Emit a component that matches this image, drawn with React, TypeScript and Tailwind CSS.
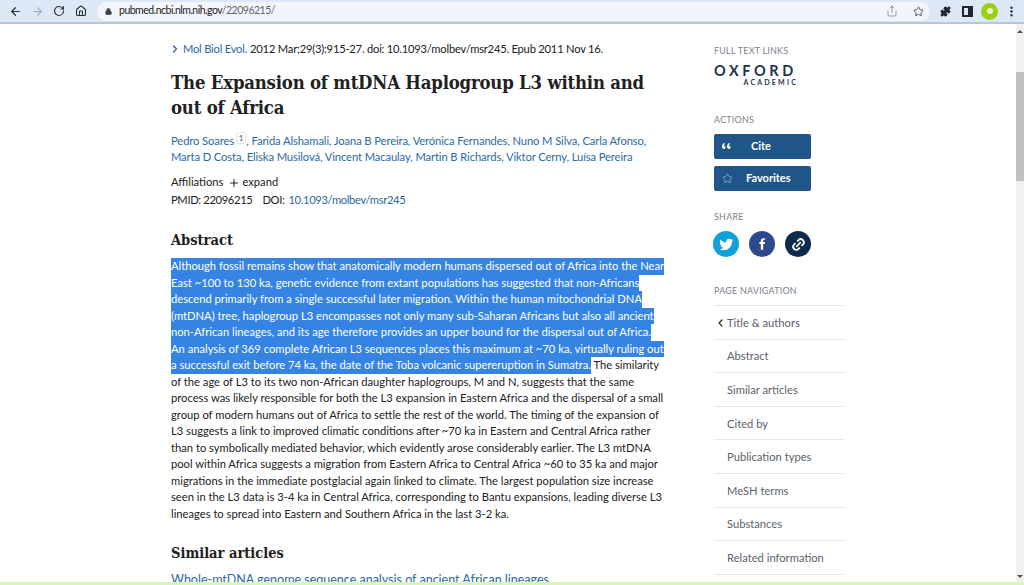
import React from 'react';
import { ArrowLeft, ArrowRight, RotateCw, Home, Lock, Share, Star, Puzzle, ChevronRight, ChevronLeft, Plus, Link2, MoreVertical } from 'lucide-react';

const selectedLines = [
  'Although fossil remains show that anatomically modern humans dispersed out of Africa into the Near',
  'East ~100 to 130 ka, genetic evidence from extant populations has suggested that non-Africans',
  'descend primarily from a single successful later migration. Within the human mitochondrial DNA',
  '(mtDNA) tree, haplogroup L3 encompasses not only many sub-Saharan Africans but also all ancient',
  'non-African lineages, and its age therefore provides an upper bound for the dispersal out of Africa.',
  'An analysis of 369 complete African L3 sequences places this maximum at ~70 ka, virtually ruling out',
];

const restLines = [
  'of the age of L3 to its two non-African daughter haplogroups, M and N, suggests that the same',
  'process was likely responsible for both the L3 expansion in Eastern Africa and the dispersal of a small',
  'group of modern humans out of Africa to settle the rest of the world. The timing of the expansion of',
  'L3 suggests a link to improved climatic conditions after ~70 ka in Eastern and Central Africa rather',
  'than to symbolically mediated behavior, which evidently arose considerably earlier. The L3 mtDNA',
  'pool within Africa suggests a migration from Eastern Africa to Central Africa ~60 to 35 ka and major',
  'migrations in the immediate postglacial again linked to climate. The largest population size increase',
  'seen in the L3 data is 3-4 ka in Central Africa, corresponding to Bantu expansions, leading diverse L3',
  'lineages to spread into Eastern and Southern Africa in the last 3-2 ka.',
];

const navItems = ['Abstract', 'Similar articles', 'Cited by', 'Publication types', 'MeSH terms', 'Substances', 'Related information'];

const App: React.FC = () => {
  return (
    <div className="h-[585px] w-[1024px] flex flex-col overflow-hidden bg-white font-['Lato',sans-serif] text-[#212121]">
      {/* Browser toolbar */}
      <div className="h-[24px] shrink-0 flex items-center bg-[#dde8f6] border-b-2 border-b-[#b4c5dc] text-[#2c3138]">
        <div className="w-[97px] flex items-center pl-[9px] gap-[9px]">
          <ArrowLeft size={13} strokeWidth={2.2} />
          <ArrowRight size={13} strokeWidth={2} className="text-[#a0aab8]" />
          <RotateCw size={12} strokeWidth={2.4} />
          <Home size={12} strokeWidth={2.2} className="ml-[1px]" />
        </div>
        <div className="w-[833px] h-[19px] rounded-full bg-[#f2f6fc] flex items-center pl-[8px] pr-[6px]">
          <Lock size={7} strokeWidth={3} className="text-[#3c4043]" fill="#3c4043" />
          <span className="ml-[7px] text-[10.5px] tracking-[-0.5px] text-[#202124]">
            pubmed.ncbi.nlm.nih.gov<span className="text-[#5f6368]">/22096215/</span>
          </span>
          <div className="ml-auto flex items-center gap-[15px] text-[#4a4f55]">
            <Share size={12} strokeWidth={1.5} className="text-[#777d85]" />
            <Star size={11} strokeWidth={2} />
          </div>
        </div>
        <div className="flex-1 flex items-center pl-[10px] text-[#1f2430]">
          <Puzzle size={11} fill="#1f2430" strokeWidth={2} />
          <div className="ml-[11px] w-[11px] h-[11px] border-2 border-[#1f2430] flex justify-end">
            <div className="w-[3px] h-full bg-[#1f2430]"></div>
          </div>
          <div className="ml-[8px] w-[17px] h-[17px] rounded-full bg-[#9ad012] flex items-center justify-center">
            <div className="w-[6px] h-[6px] rounded-full bg-[#eaf6c4]"></div>
          </div>
          <MoreVertical size={13} strokeWidth={2.4} className="ml-[7px]" />
        </div>
      </div>

      {/* Page + scrollbar */}
      <div className="flex-1 min-h-0 flex overflow-hidden">
        <div className="flex-1 flex overflow-hidden">
          {/* Article column */}
          <div className="w-[714px] shrink-0 pl-[171px] pt-[17px]">
            <div className="flex items-center h-[16px] text-[11.2px] tracking-[-0.22px] text-[#212121] -ml-[1px]">
              <ChevronRight size={12} strokeWidth={2.2} className="text-[#20558a] -ml-[1px] mr-[2px]" />
              <span className="text-[#2a69a3]">Mol Biol Evol.</span>
              <span className="ml-[3px]">2012 Mar;29(3):915-27. doi: 10.1093/molbev/msr245. Epub 2011 Nov 16.</span>
            </div>

            <h1 className="mt-[13px] font-['DejaVu_Serif_Condensed','DejaVu_Serif',serif] font-bold text-[18.4px] leading-[25px] tracking-[-0.2px] text-[#212121] whitespace-nowrap">
              The Expansion of mtDNA Haplogroup L3 within and<br />out of Africa
            </h1>

            <div className="mt-[13px] text-[11.2px] tracking-[-0.1px] leading-[16px] text-[#2a69a3]">
              <div className="whitespace-nowrap">
                Pedro Soares <sup className="text-[8px] text-[#5b616b] border border-[#e6e6e6] rounded-[2px] px-[2px] -ml-[1px]">1</sup>, Farida Alshamali, Joana B Pereira, Verónica Fernandes, Nuno M Silva, Carla Afonso,
              </div>
              <div className="whitespace-nowrap">
                Marta D Costa, Eliska Musilová, Vincent Macaulay, Martin B Richards, Viktor Cerny, Luísa Pereira
              </div>
            </div>

            <div className="mt-[9px] flex items-center h-[17px] text-[11.2px]">
              Affiliations
              <Plus size={12} strokeWidth={2} className="ml-[5px] mr-[2px]" />
              expand
            </div>
            <div className="mt-[1px] flex items-center h-[17px] text-[11.2px] tracking-[-0.35px]">
              PMID: 22096215
              <span className="ml-[10px]">DOI:</span>
              <span className="ml-[4px] text-[#2a69a3]">10.1093/molbev/msr245</span>
            </div>

            <h2 className="mt-[21px] font-['DejaVu_Serif_Condensed','DejaVu_Serif',serif] font-bold text-[14.5px] leading-[20px]">Abstract</h2>

            <div className="mt-[8px] text-[11.2px] leading-[16.53px] whitespace-nowrap">
              {selectedLines.map((line) => (
                <div key={line}>
                  <span className="inline-block bg-[#3584e4] text-white">{line}</span>
                </div>
              ))}
              <div>
                <span className="inline-block bg-[#3584e4] text-white">a successful exit before 74 ka, the date of the Toba volcanic supereruption in Sumatra.</span>{' '}
                The similarity
              </div>
              {restLines.map((line) => (
                <div key={line}>{line}</div>
              ))}
            </div>

            <h2 className="mt-[20px] font-['DejaVu_Serif_Condensed','DejaVu_Serif',serif] font-bold text-[14.5px] leading-[20px]">Similar articles</h2>
            <div className="mt-[8px] text-[12.5px] leading-[18px] text-[#2a69a3] whitespace-nowrap">
              Whole-mtDNA genome sequence analysis of ancient African lineages.
            </div>
          </div>

          {/* Sidebar */}
          <aside className="w-[130px] shrink-0 pt-[21px]">
            <div className="text-[9px] leading-[12px] tracking-[0.2px] text-[#7c828b]">FULL TEXT LINKS</div>
            <div className="mt-[7px] text-[#1f3350] w-[84px]">
              <div className="text-[14.5px] leading-[14px] font-bold tracking-[3.6px] whitespace-nowrap">OXFORD</div>
              <div className="text-[7px] leading-[8px] font-bold tracking-[2.2px] text-right whitespace-nowrap">ACADEMIC</div>
            </div>

            <div className="mt-[28px] text-[9px] leading-[12px] tracking-[0.2px] text-[#7c828b]">ACTIONS</div>
            <button className="mt-[8px] w-[97px] h-[25px] rounded-[2px] bg-[#20558a] text-white text-[11px] font-bold flex items-center">
              <svg viewBox="0 0 10 7" width="9" height="6.5" fill="white" className="ml-[8px] mr-[20px]">
                <path d="M2.300 0C.800.900 0 2.200 0 3.800 0 5.400.8 6.500 2.100 6.500c1 0 1.800-.7 1.800-1.700S3.200 3.200 2.300 3.200h-.4C2 2.200 2.600 1.400 3.400.8L2.300 0zM7.900 0C6.400.900 5.600 2.200 5.600 3.800c0 1.600.8 2.700 2.100 2.700 1 0 1.800-.7 1.800-1.700S8.800 3.200 7.900 3.200h-.4c.1-1 .7-1.800 1.500-2.400L7.900 0z" />
              </svg>
              <span>Cite</span>
            </button>
            <button className="mt-[7px] w-[97px] h-[25px] rounded-[2px] bg-[#20558a] text-white text-[11px] font-bold flex items-center">
              <Star size={11} strokeWidth={1.3} className="ml-[8px] mr-[13px] text-[#b9cfe6]" />
              <span>Favorites</span>
            </button>

            <div className="mt-[20px] text-[9px] leading-[12px] tracking-[0.2px] text-[#7c828b]">SHARE</div>
            <div className="mt-[8px] flex gap-[10px] -ml-[1px]">
              <div className="w-[26px] h-[26px] rounded-full bg-[#0f9fdb] flex items-center justify-center">
                <svg viewBox="0 0 24 24" width="15" height="15" fill="white">
                  <path d="M23 5.100c-.8.4-1.700.6-2.600.7.900-.6 1.600-1.400 2-2.500-.9.500-1.900.9-2.900 1.100a4.600 4.600 0 0 0-7.900 4.200C7.800 8.400 4.400 6.600 2.100 3.800a4.600 4.600 0 0 0 1.400 6.100c-.7 0-1.400-.2-2.100-.6v.1c0 2.200 1.600 4.100 3.700 4.500-.7.200-1.400.2-2.100.1.600 1.800 2.300 3.100 4.300 3.200A9.300 9.300 0 0 1 .5 19.100 13 13 0 0 0 7.600 21.200c8.500 0 13.100-7 13.100-13.100v-.6c.9-.6 1.700-1.400 2.300-2.400z" />
                </svg>
              </div>
              <div className="w-[26px] h-[26px] rounded-full bg-[#2c4a8c] flex items-center justify-center">
                <svg viewBox="0 0 24 24" width="14" height="14" fill="white">
                  <path d="M14 8.500V6.300c0-.9.600-1.300 1.200-1.300H17V2h-2.700C11.500 2 10 3.800 10 6v2.500H7.500V12H10v10h4V12h2.600l.5-3.500H14z" />
                </svg>
              </div>
              <div className="w-[26px] h-[26px] rounded-full bg-[#0f2a4d] flex items-center justify-center">
                <Link2 size={15} strokeWidth={2.8} className="text-white -rotate-45" />
              </div>
            </div>

            <div className="mt-[28px] text-[9px] leading-[12px] tracking-[0.2px] text-[#7c828b]">PAGE NAVIGATION</div>
            <nav className="mt-[8px] text-[11.2px] text-[#5b616b] border-t border-[#e6e6e6]">
              <div className="h-[33.6px] pt-[2px] flex items-center border-b border-[#e6e6e6]">
                <ChevronLeft size={12} strokeWidth={2.4} className="text-[#212121] w-[13px]" />
                Title &amp; authors
              </div>
              {navItems.map((item) => (
                <div key={item} className="h-[33.6px] pt-[2px] flex items-center pl-[13px] border-b border-[#e6e6e6]">
                  {item}
                </div>
              ))}
            </nav>
          </aside>
        </div>

        {/* Scrollbar */}
        <div className="w-[8px] shrink-0 bg-[#f1f1f1] flex flex-col items-center">
          <div className="mt-[6px] w-0 h-0 border-x-[3px] border-x-transparent border-b-[3px] border-b-[#505050]"></div>
          <div className="mt-[39px] w-full h-[109px] bg-[#c1c1c1]"></div>
          <div className="mt-auto mb-[4px] w-0 h-0 border-x-[3px] border-x-transparent border-t-[3px] border-t-[#505050]"></div>
        </div>
      </div>

      {/* Bottom edge */}
      <div className="h-[3px] shrink-0 bg-[#dcf4b8]"></div>
    </div>
  );
};

export default App;
